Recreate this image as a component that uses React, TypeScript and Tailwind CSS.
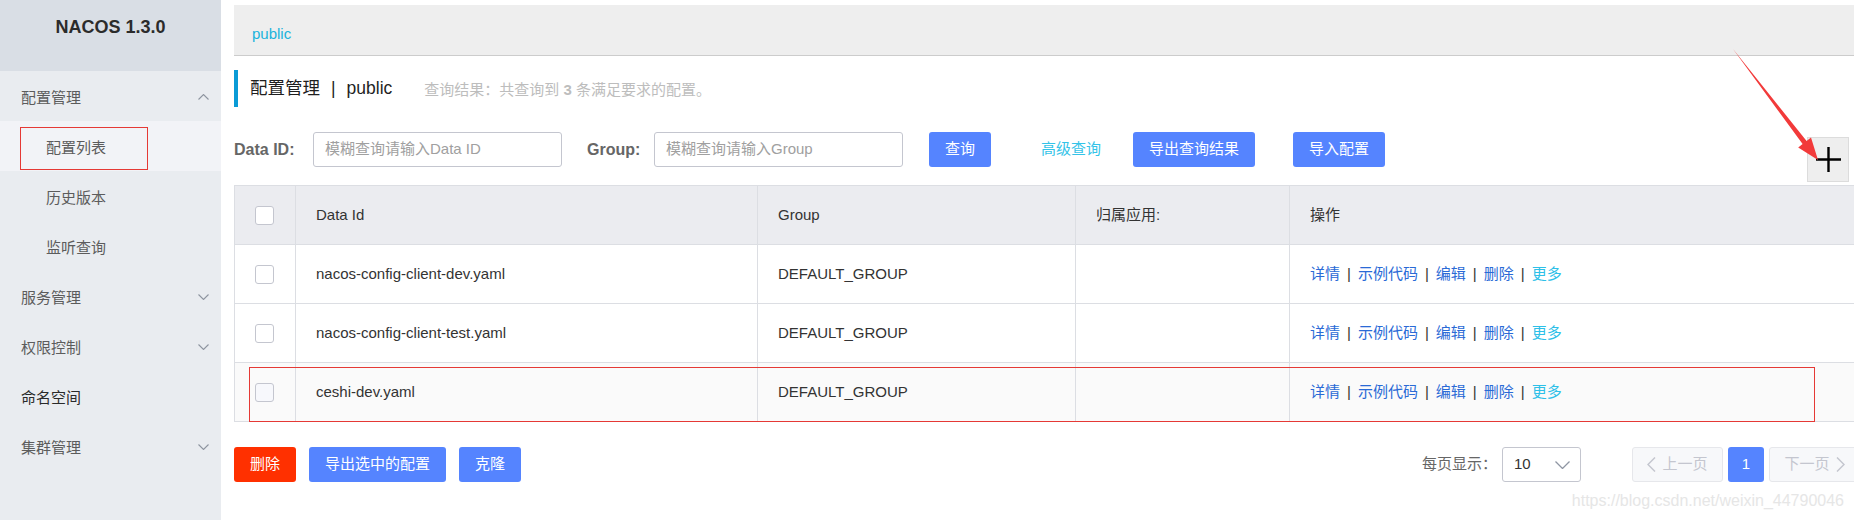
import React from "react";

const Chevron = ({ up }: { up?: boolean }) => (
  <svg width="11" height="6" viewBox="0 0 11 6" className="shrink-0 mb-[3px]">
    <polyline
      points={up ? "0.5,5.5 5.5,0.5 10.5,5.5" : "0.5,0.5 5.5,5.5 10.5,0.5"}
      fill="none"
      stroke="#8e95a0"
      strokeWidth="1.1"
    />
  </svg>
);

const MenuRow = ({ label, chevron, dark }: { label: string; chevron?: "up" | "down"; dark?: boolean }) => (
  <div
    className={`h-[50px] flex items-center justify-between pl-[21px] pr-[12px] pt-[5px] text-[15px] ${
      dark ? "text-[#2a2a2a]" : "text-[#5c5c5c]"
    }`}
  >
    <span>{label}</span>
    {chevron && <Chevron up={chevron === "up"} />}
  </div>
);

const SubRow = ({ label, active }: { label: string; active?: boolean }) => (
  <div
    className={`relative h-[50px] flex items-center pl-[46px] pt-[5px] text-[15px] text-[#5c5c5c] ${
      active ? "bg-[#f2f3f7]" : ""
    }`}
  >
    <span>{label}</span>
    {active && (
      <div className="absolute left-[20px] top-[6px] w-[128px] h-[43px] border border-[#e53935]" />
    )}
  </div>
);

const Checkbox = ({ tint }: { tint?: boolean }) => (
  <div
    className={`w-[19px] h-[19px] rounded-[3px] border border-[#c4c6cf] ${
      tint ? "bg-[#f7f8fc]" : "bg-white"
    }`}
  />
);

const Sep = () => <span className="mx-[7px] text-[#333]">|</span>;

const Actions = () => (
  <div className="flex items-center text-[15px]">
    <span className="text-[#2a6ad6]">详情</span>
    <Sep />
    <span className="text-[#2a6ad6]">示例代码</span>
    <Sep />
    <span className="text-[#2a6ad6]">编辑</span>
    <Sep />
    <span className="text-[#2a6ad6]">删除</span>
    <Sep />
    <span className="text-[#2ec0e8]">更多</span>
  </div>
);

const rows = [
  { id: "nacos-config-client-dev.yaml", group: "DEFAULT_GROUP" },
  { id: "nacos-config-client-test.yaml", group: "DEFAULT_GROUP" },
  { id: "ceshi-dev.yaml", group: "DEFAULT_GROUP" },
];

const grid = "grid grid-cols-[61px_462px_318px_214px_1fr]";
const cell = "border-r border-[#dcdee3] flex items-center pl-[20px]";

export default function App() {
  return (
    <div className="relative w-[1854px] h-[520px] overflow-hidden bg-white flex font-['Liberation_Sans','Noto_Sans_CJK_SC',sans-serif] text-[#333]">
      {/* Sidebar */}
      <aside className="w-[221px] shrink-0 h-[520px] bg-[#e9ecf0] flex flex-col">
        <div className="h-[71px] bg-[#d9dee5] flex justify-center pt-[17px]">
          <span className="font-bold text-[18px] leading-[20px] text-[#2b2b2b]">NACOS 1.3.0</span>
        </div>
        <MenuRow label="配置管理" chevron="up" />
        <SubRow label="配置列表" active />
        <SubRow label="历史版本" />
        <SubRow label="监听查询" />
        <MenuRow label="服务管理" chevron="down" />
        <MenuRow label="权限控制" chevron="down" />
        <MenuRow label="命名空间" dark />
        <MenuRow label="集群管理" chevron="down" />
      </aside>

      {/* Main */}
      <main className="w-[1626px] shrink-0 ml-[13px] pt-[5px]">
        <div className="h-[51px] bg-[#eeeeee] border-b border-[#cccccc] flex items-center pl-[18px] pt-[8px] text-[15px] text-[#1ab3dc]">
          public
        </div>

        <div className="mt-[14px] h-[37px] border-l-4 border-[#0a9bd6] flex items-center pl-[12px]">
          <span className="text-[17.5px] text-[#1f1f1f]">配置管理</span>
          <span className="text-[17.5px] text-[#1f1f1f] mx-[11px]">|</span>
          <span className="text-[17.5px] text-[#1f1f1f]">public</span>
          <span className="ml-[32px] mt-[3px] text-[15px] text-[#bdbdbd]">
            查询结果：共查询到 <b className="font-bold">3</b> 条满足要求的配置。
          </span>
        </div>

        <div className="mt-[25px] flex items-start">
          <div className="h-[35px] flex items-center">
            <span className="w-[62px] font-bold text-[16px] text-[#666]">Data ID:</span>
            <div className="ml-[17px] w-[249px] h-[35px] border border-[#c4c6cf] rounded-[3px] flex items-center pl-[11px] text-[15px] text-[#a0a0a0]">
              模糊查询请输入Data ID
            </div>
            <span className="ml-[25px] w-[51px] font-bold text-[16px] text-[#666]">Group:</span>
            <div className="ml-[16px] w-[249px] h-[35px] border border-[#c4c6cf] rounded-[3px] flex items-center pl-[11px] text-[15px] text-[#a0a0a0]">
              模糊查询请输入Group
            </div>
            <div className="ml-[26px] h-[35px] px-[16px] bg-[#5584ff] rounded-[3px] flex items-center text-[15px] text-white">
              查询
            </div>
            <span className="ml-[50px] text-[15px] text-[#33c3e8]">高级查询</span>
            <div className="ml-[32px] h-[35px] px-[16px] bg-[#5584ff] rounded-[3px] flex items-center text-[15px] text-white">
              导出查询结果
            </div>
            <div className="ml-[38px] h-[35px] px-[16px] bg-[#5584ff] rounded-[3px] flex items-center text-[15px] text-white">
              导入配置
            </div>
          </div>
          <div className="ml-auto mr-[11px] mt-[5px] w-[42px] h-[45px] bg-[#eeeeee] border border-[#dcdcdc] flex items-center justify-center">
            <svg width="27" height="27" viewBox="0 0 27 27">
              <path d="M13.5 1v25M1 13.5h25" stroke="#000" strokeWidth="2.4" fill="none" />
            </svg>
          </div>
        </div>

        {/* Table */}
        <div className="mt-[3px] border-t border-l border-[#dcdee3]">
          <div className={`${grid} h-[59px] bg-[#ebecf0] border-b border-[#dcdee3] text-[15px] text-[#333]`}>
            <div className={cell}>
              <Checkbox />
            </div>
            <div className={cell}>Data Id</div>
            <div className={cell}>Group</div>
            <div className={cell}>归属应用:</div>
            <div className={cell}>操作</div>
          </div>
          {rows.map((r, i) => (
            <div
              key={r.id}
              className={`relative ${grid} h-[59px] border-b border-[#dcdee3] text-[15px] text-[#333] ${
                i === 2 ? "bg-[#fafafa]" : "bg-white"
              }`}
            >
              <div className={cell}>
                <Checkbox tint={i === 2} />
              </div>
              <div className={cell}>{r.id}</div>
              <div className={cell}>{r.group}</div>
              <div className={cell}></div>
              <div className={cell}>
                <Actions />
              </div>
              {i === 2 && (
                <div className="absolute left-[14px] top-[4px] w-[1566px] h-[55px] border border-[#e53935] pointer-events-none" />
              )}
            </div>
          ))}
        </div>

        {/* Bottom bar */}
        <div className="mt-[25px] flex items-center">
          <div className="h-[35px] px-[16px] bg-[#ff3000] rounded-[3px] flex items-center text-[15px] text-white">删除</div>
          <div className="ml-[13px] h-[35px] px-[16px] bg-[#5584ff] rounded-[3px] flex items-center text-[15px] text-white">
            导出选中的配置
          </div>
          <div className="ml-[13px] h-[35px] px-[16px] bg-[#5584ff] rounded-[3px] flex items-center text-[15px] text-white">
            克隆
          </div>
          <div className="ml-auto flex items-center">
            <span className="text-[15px] text-[#666]">每页显示：</span>
            <div className="ml-[5px] w-[79px] h-[35px] border border-[#c4c6cf] rounded-[3px] flex items-center justify-between pl-[11px] pr-[10px]">
              <span className="text-[15px] text-[#333]">10</span>
              <svg width="15" height="8" viewBox="0 0 15 8">
                <polyline points="0.5,0.5 7.5,7.5 14.5,0.5" fill="none" stroke="#8f96a3" strokeWidth="1.3" />
              </svg>
            </div>
            <div className="ml-[51px] w-[91px] h-[35px] bg-[#f7f8fa] border border-[#e6e7eb] rounded-[3px] flex items-center justify-center gap-[6px] text-[15px] text-[#c4c6cf]">
              <svg width="9" height="15" viewBox="0 0 9 15">
                <polyline points="8,0.5 1,7.5 8,14.5" fill="none" stroke="#c4c6cf" strokeWidth="1.5" />
              </svg>
              <span>上一页</span>
            </div>
            <div className="ml-[5px] w-[36px] h-[35px] bg-[#5584ff] rounded-[3px] flex items-center justify-center text-[15px] text-white">
              1
            </div>
            <div className="ml-[5px] w-[91px] h-[35px] bg-[#f7f8fa] border border-[#e6e7eb] rounded-[3px] flex items-center justify-center gap-[6px] text-[15px] text-[#c4c6cf]">
              <span>下一页</span>
              <svg width="9" height="15" viewBox="0 0 9 15">
                <polyline points="1,0.5 8,7.5 1,14.5" fill="none" stroke="#c4c6cf" strokeWidth="1.5" />
              </svg>
            </div>
          </div>
        </div>
      </main>

      {/* Annotation arrow */}
      <svg className="absolute inset-0 pointer-events-none" width="1854" height="520" viewBox="0 0 1854 520">
        <polygon
          points="1733,49 1802.6,144 1798.2,147.4 1818,160 1811,137.6 1806.6,141"
          fill="#f23a3a"
        />
      </svg>

      {/* Watermark */}
      <div className="absolute right-[10px] top-[492px] text-[16px] leading-[18px] text-[#e6e6e6]">
        https://blog.csdn.net/weixin_44790046
      </div>
    </div>
  );
}
